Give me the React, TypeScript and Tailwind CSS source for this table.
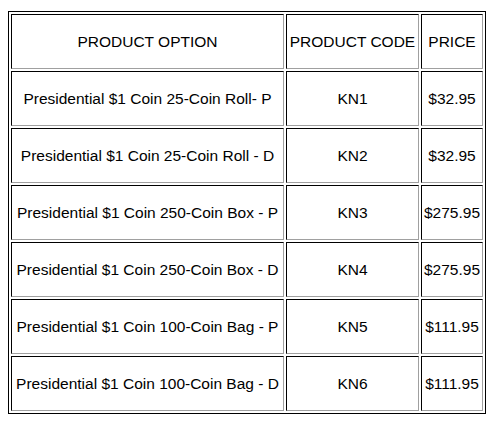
const rows = [
  { option: 'Presidential $1 Coin 25-Coin Roll- P', code: 'KN1', price: '$32.95' },
  { option: 'Presidential $1 Coin 25-Coin Roll - D', code: 'KN2', price: '$32.95' },
  { option: 'Presidential $1 Coin 250-Coin Box - P', code: 'KN3', price: '$275.95' },
  { option: 'Presidential $1 Coin 250-Coin Box - D', code: 'KN4', price: '$275.95' },
  { option: 'Presidential $1 Coin 100-Coin Bag - P', code: 'KN5', price: '$111.95' },
  { option: 'Presidential $1 Coin 100-Coin Bag - D', code: 'KN6', price: '$111.95' },
];

const cell =
  'h-[55px] p-0 pt-px text-center align-middle font-normal whitespace-nowrap border border-t-black border-l-black border-r-[#a0a0a0] border-b-[#a0a0a0]';

export default function App() {
  return (
    <div className="bg-white w-[498px] h-[422px] pl-[8px] pt-[11px] text-black text-[15.5px] font-['Liberation_Sans',Arial,sans-serif]">
      <table className="w-[478px] table-fixed border-separate border-spacing-[2px] border border-black">
        <thead>
          <tr>
            <th className={`${cell} w-[273px]`}>PRODUCT OPTION</th>
            <th className={`${cell} w-[133px]`}>PRODUCT CODE</th>
            <th className={`${cell} w-[62px]`}>PRICE</th>
          </tr>
        </thead>
        <tbody>
          {rows.map((row) => (
            <tr key={row.code}>
              <td className={cell}>{row.option}</td>
              <td className={cell}>{row.code}</td>
              <td className={cell}>{row.price}</td>
            </tr>
          ))}
        </tbody>
      </table>
    </div>
  );
}
